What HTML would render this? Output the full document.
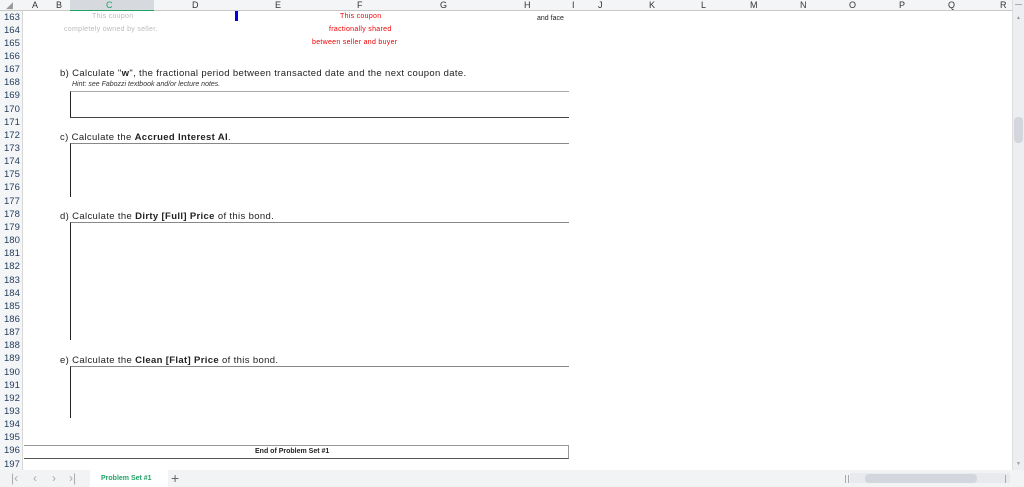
<!DOCTYPE html>
<html><head><meta charset="utf-8"><style>
*{margin:0;padding:0;box-sizing:border-box}
body{width:1024px;height:487px;overflow:hidden;background:#fff;font-family:"Liberation Sans",Arial,sans-serif;position:relative}
.a{position:absolute;white-space:nowrap}
.hdr{position:absolute;left:0;top:0;width:1012px;height:11px;background:#f4f5f7;border-bottom:1px solid #c8c8c8}
.ch{position:absolute;top:0;font-size:9px;color:#333;line-height:11px}
.rh{position:absolute;left:0;top:11px;width:23px;height:459px;background:#f4f5f7;border-right:1px solid #d8d8d8}
.rn{position:absolute;left:4px;font-size:9.5px;color:#1f3a5a;line-height:13px}
.t{font-size:9.5px;color:#222;letter-spacing:0.35px}
.nav{position:absolute;top:470px;font-size:12px;color:#aaa;line-height:16px}
</style></head><body>
<div class="hdr"></div>
<div class="a" style="left:70px;top:0;width:84px;height:11px;background:#d6d9de;border-bottom:1px solid #21a366"></div>
<div class="ch" style="left:6px;color:#999">◢</div>
<div class="ch" style="left:32px">A</div>
<div class="ch" style="left:56px">B</div>
<div class="ch" style="left:106px;color:#21a366">C</div>
<div class="ch" style="left:192px">D</div>
<div class="ch" style="left:275px">E</div>
<div class="ch" style="left:357px">F</div>
<div class="ch" style="left:440px">G</div>
<div class="ch" style="left:524px">H</div>
<div class="ch" style="left:572px">I</div>
<div class="ch" style="left:598px">J</div>
<div class="ch" style="left:649px">K</div>
<div class="ch" style="left:701px">L</div>
<div class="ch" style="left:750px">M</div>
<div class="ch" style="left:800px">N</div>
<div class="ch" style="left:849px">O</div>
<div class="ch" style="left:899px">P</div>
<div class="ch" style="left:948px">Q</div>
<div class="ch" style="left:1000px">R</div>
<div class="rh"></div>
<div id="rows"></div>
<script>
var s='';for(var i=0;i<35;i++){s+='<div class="rn" style="top:'+(10.5+i*13.15)+'px">'+(163+i)+'</div>';}
document.getElementById('rows').innerHTML=s;
</script>
<div class="a" style="left:235px;top:11px;width:3px;height:10px;background:#0000e0"></div>
<div class="a" style="left:92px;top:13px;font-size:7px;color:#bbb;letter-spacing:0.3px">This coupon</div>
<div class="a" style="left:64px;top:26px;font-size:7px;color:#bbb;letter-spacing:0.3px">completely owned by seller.</div>
<div class="a" style="left:340px;top:13px;font-size:7px;color:#e00;letter-spacing:0.3px">This coupon</div>
<div class="a" style="left:329px;top:26px;font-size:7px;color:#e00;letter-spacing:0.3px">fractionally shared</div>
<div class="a" style="left:312px;top:39px;font-size:7px;color:#e00;letter-spacing:0.3px">between seller and buyer</div>
<div class="a" style="left:537px;top:15px;font-size:7px;color:#222">and face</div>
<div class="a t" style="left:60px;top:68px">b) Calculate "<b>w</b>", the fractional period between transacted date and the next coupon date.</div>
<div class="a" style="left:72px;top:81px;font-size:7px;font-style:italic;color:#333">Hint: see Fabozzi textbook and/or lecture notes.</div>
<div class="a" style="left:70px;top:91px;width:499px;height:27px;border-top:1px solid #aaa;border-left:1px solid #222;border-bottom:1px solid #444"></div>
<div class="a t" style="left:60px;top:132px">c) Calculate the <b>Accrued Interest AI</b>.</div>
<div class="a" style="left:70px;top:143px;width:499px;height:54px;border-top:1px solid #888;border-left:1px solid #222"></div>
<div class="a t" style="left:60px;top:211px">d) Calculate the <b>Dirty [Full] Price</b> of this bond.</div>
<div class="a" style="left:70px;top:222px;width:499px;height:118px;border-top:1px solid #888;border-left:1px solid #222"></div>
<div class="a t" style="left:60px;top:355px">e) Calculate the <b>Clean [Flat] Price</b> of this bond.</div>
<div class="a" style="left:70px;top:366px;width:499px;height:52px;border-top:1px solid #888;border-left:1px solid #222"></div>
<div class="a" style="left:24px;top:445px;width:545px;height:14px;border-top:1px solid #999;border-bottom:1px solid #555;border-right:1px solid #999"></div>
<div class="a" style="left:255px;top:448px;font-size:7px;font-weight:bold;color:#222">End of Problem Set #1</div>
<div class="a" style="left:1012px;top:0;width:12px;height:470px;background:#eceef2;border-left:1px solid #ddd"></div>
<div class="a" style="left:1015px;top:4px;width:7px;height:1px;background:#aaa"></div>
<div class="a" style="left:1016px;top:15px;font-size:5px;color:#999">▲</div>
<div class="a" style="left:1014px;top:117px;width:9px;height:26px;background:#d3d6dc;border-radius:4px"></div>
<div class="a" style="left:1016px;top:461px;font-size:5px;color:#999">▼</div>
<div class="a" style="left:0;top:470px;width:1024px;height:17px;background:#f2f3f5"></div>
<div class="a" style="left:90px;top:470px;width:78px;height:17px;background:#fff"></div>
<div class="nav" style="left:11px">|‹</div>
<div class="nav" style="left:33px">‹</div>
<div class="nav" style="left:52px">›</div>
<div class="nav" style="left:69px">›|</div>
<div class="a" style="left:101px;top:475px;font-size:7px;font-weight:bold;color:#21a366">Problem Set #1</div>
<div class="a" style="left:171px;top:470px;font-size:14px;color:#666;line-height:16px">+</div>
<div class="a" style="left:850px;top:473px;width:160px;height:10px;background:#e8eaee"></div>
<div class="a" style="left:845px;top:475px;width:1px;height:8px;background:#aaa"></div>
<div class="a" style="left:848px;top:475px;width:1px;height:8px;background:#aaa"></div>
<div class="a" style="left:865px;top:474px;width:112px;height:9px;background:#d3d6dc;border-radius:4px"></div>
<div class="a" style="left:1005px;top:475px;width:1px;height:8px;background:#aaa"></div>
</body></html>
